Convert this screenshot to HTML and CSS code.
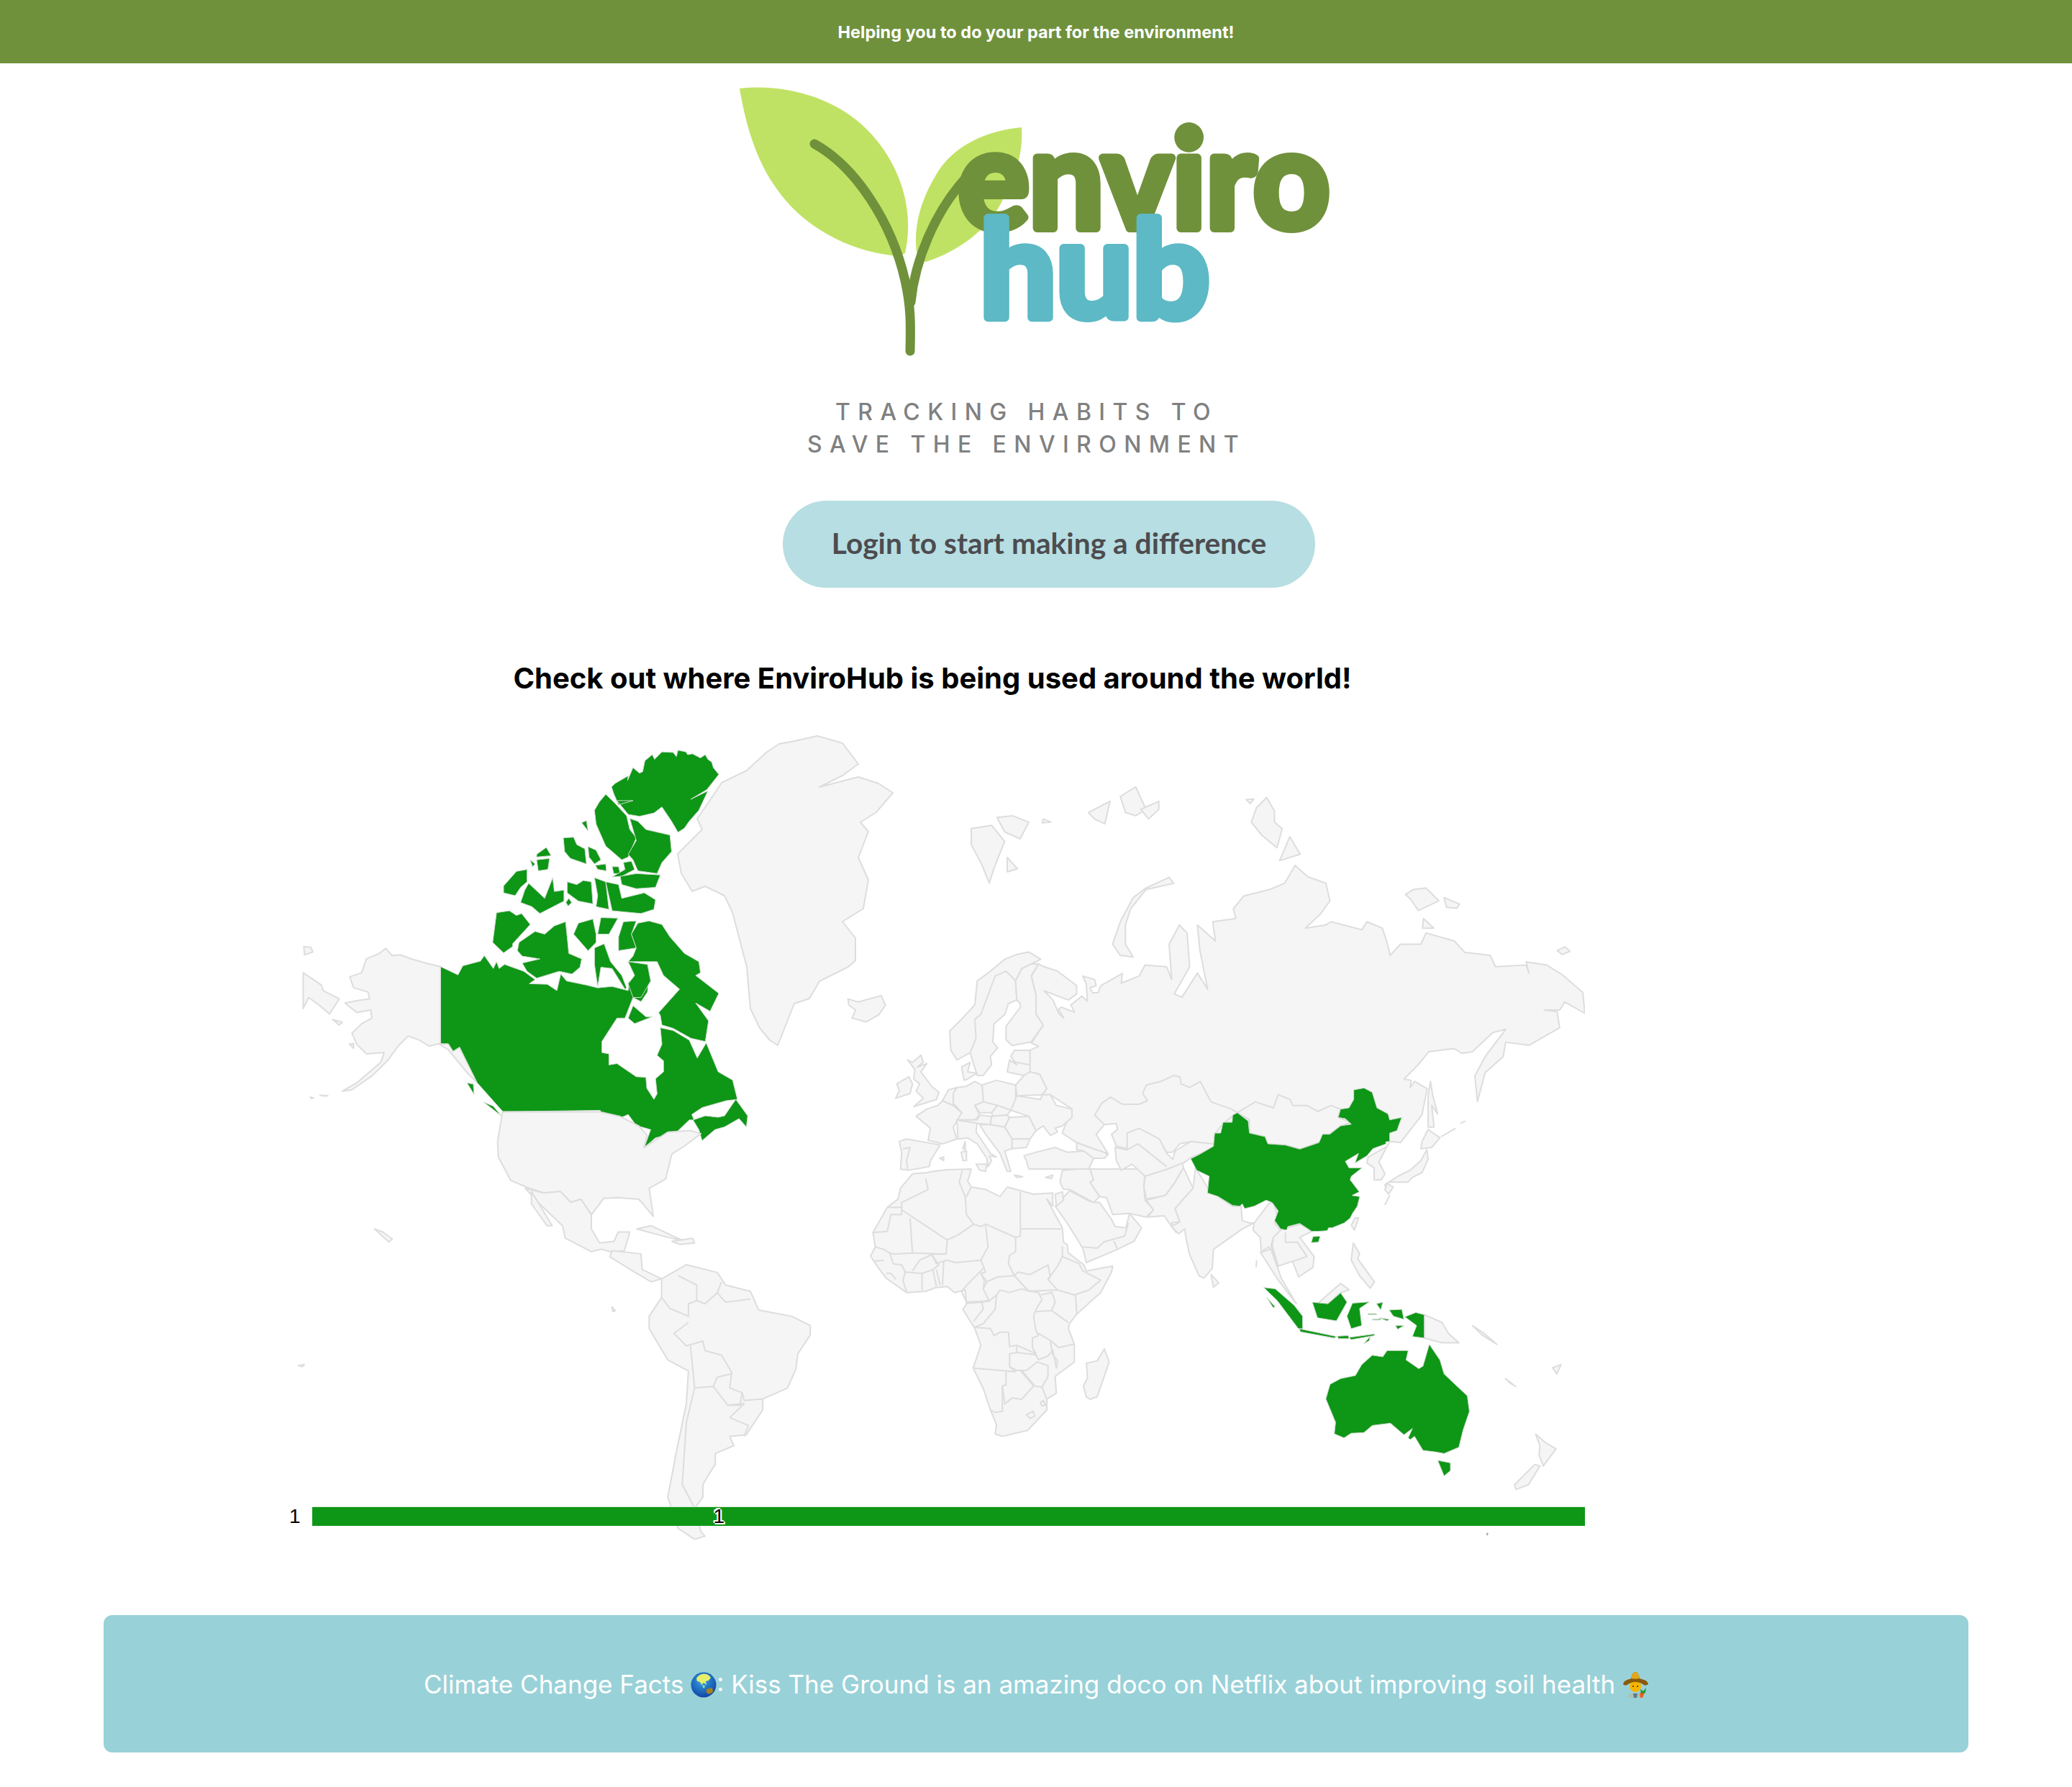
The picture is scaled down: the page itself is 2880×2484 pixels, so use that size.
FILE: index.html
```html
<!DOCTYPE html>
<html lang="en">
<head>
    <meta charset="UTF-8">
    <title>EnviroHub</title>
    <link rel="stylesheet" href="styles.css">
</head>
<body>

    <header class="top-banner">Helping you to do your part for the environment!</header>

    <!-- Logo -->
    <svg class="logo" viewBox="1028 118 824 380" role="img" aria-label="EnviroHub">
        <path class="leaf" d="M1028 123 C1090 116 1160 135 1205 180 C1250 225 1272 290 1258 352 L1250 356 C1190 352 1125 322 1085 270 C1050 225 1036 170 1028 123Z"/>
        <path class="leaf" d="M1420 177 C1375 181 1325 200 1300 245 C1276 285 1268 325 1276 362 L1287 364 C1330 350 1375 320 1395 275 C1414 240 1422 210 1420 177Z"/>
        <path class="stem" d="M1132 200 C1190 232 1240 310 1258 390 C1266 425 1266 450 1265 488"/>
        <path class="stem" d="M1266 420 C1272 360 1300 295 1340 250"/>
        <text class="logo-enviro" x="1332" y="317" textLength="516" lengthAdjust="spacingAndGlyphs">enviro</text>
        <text class="logo-hub" x="1362" y="441" textLength="319" lengthAdjust="spacingAndGlyphs">hub</text>
    </svg>

    <p class="tagline">TRACKING HABITS TO<br>SAVE THE ENVIRONMENT</p>

    <a class="login-btn">Login to start making a difference</a>

    <h2 class="map-title">Check out where EnviroHub is being used around the world!</h2>

    <!-- World map, groups use the scale each area was measured at -->
    <div class="map-wrap">
        <svg class="map" viewBox="389 1010 1814 1130" width="1814" height="1130">
            <!-- Alaska and Canada -->
            <g transform="translate(400 1000) scale(0.4464 0.3827)">
                <polygon class="land" points="476,898 430,885 385,870 350,855 325,858 305,832 285,850 245,870 230,920 193,935 205,975 250,990 255,1015 225,1020 178,1030 215,1065 258,1055 262,1085 230,1105 200,1140 215,1180 245,1215 300,1210 290,1245 250,1285 215,1320 170,1350 200,1345 262,1295 310,1240 345,1185 375,1150 410,1165 440,1187 470,1178 500,1200 560,1285 590,1320 535,1190 515,1205 500,1178 476,1178"/>
                <polygon class="land" points="48,920 105,965 110,985 160,1015 130,1070 100,1040 65,1010 48,1050"/>
                <polygon class="land" points="50,825 72,828 78,845 52,855"/>
                <polygon class="land" points="140,1090 170,1100 160,1110"/>
                <polygon class="land" points="192,1180 205,1177 205,1195"/>
                <polygon class="land" points="70,1372 80,1375 75,1378"/>
                <polygon class="land" points="100,1365 125,1367 110,1368"/>

                <polygon class="on" points="476,898 530,928 545,895 600,878 612,858 640,905 650,880 658,905 675,890 735,915 770,945 752,960 808,962 838,985 850,925 868,950 930,965 965,975 1010,970 1060,985 1062,950 1085,1010 1125,930 1120,990 1100,1025 1075,1010 1050,1085 1025,1085 1000,1130 978,1170 978,1210 1000,1215 1000,1255 1025,1250 1085,1298 1115,1300 1118,1340 1140,1380 1150,1360 1145,1305 1170,1280 1170,1240 1150,1220 1165,1180 1160,1120 1200,1130 1250,1165 1275,1230 1303,1175 1340,1280 1385,1310 1400,1380 1365,1385 1290,1410 1258,1435 1265,1455 1250,1455 1210,1500 1145,1520 1110,1555 1130,1490 1085,1475 1060,1435 1040,1445 975,1430 973,1420 670,1425 590,1320 535,1190 515,1205 500,1178 476,1178"/>
                <polygon class="on" points="1262,1455 1300,1440 1340,1445 1360,1440 1395,1380 1432,1440 1428,1480 1405,1450 1360,1480 1330,1490 1290,1530 1280,1490"/>
                <polygon class="on" points="1008,245 1020,232 1060,205 1058,222 1075,175 1095,195 1105,190 1112,150 1135,128 1142,145 1165,118 1200,120 1210,135 1215,112 1240,118 1245,128 1260,125 1285,140 1300,128 1308,145 1320,155 1325,175 1342,200 1305,255 1255,290 1308,260 1280,330 1250,370 1235,395 1215,410 1195,370 1165,318 1140,340 1095,352 1060,345 1025,295 1045,295 1075,295 1030,310 1015,270"/>
                <polygon class="on" points="990,272 1015,300 1055,350 1065,400 1085,430 1060,500 1040,510 990,460 960,380 955,330 970,300"/>
                <polygon class="on" points="1065,360 1090,370 1115,400 1190,420 1195,480 1165,520 1150,560 1090,550 1075,510 1060,490 1085,440 1075,400"/>
                <polygon class="on" points="915,375 930,368 935,405"/>
                <polygon class="on" points="858,430 890,428 900,455 925,470 930,525 880,505 862,480"/>
                <polygon class="on" points="935,462 960,475 975,510 955,525 938,500"/>
                <polygon class="on" points="775,490 805,465 820,495 775,500"/>
                <polygon class="on" points="775,510 815,505 810,545 780,550"/>
                <polygon class="on" points="755,510 770,525 762,535"/>
                <polygon class="on" points="958,530 990,525 992,550 965,545"/>
                <polygon class="on" points="1010,535 1030,535 1035,560 1015,560"/>
                <polygon class="on" points="1045,520 1070,515 1080,545 1040,570 1010,572 1050,545"/>
                <polygon class="on" points="1035,570 1085,560 1160,565 1145,610 1085,615 1040,600"/>
                <polygon class="on" points="712,552 745,545 745,590 725,610 708,640 672,630 672,605"/>
                <polygon class="on" points="750,595 800,650 825,575 830,625 860,620 860,660 785,705 760,680 725,665 738,620"/>
                <polygon class="on" points="870,590 900,600 920,585 945,590 950,670 905,660 870,630"/>
                <polygon class="on" points="955,575 990,590 1000,690 960,680 965,640"/>
                <polygon class="on" points="990,590 1030,600 1040,650 1110,630 1145,655 1140,690 1100,705 1010,695"/>
                <polygon class="on" points="875,650 884,665 873,678 866,665"/>
                <polygon class="on" points="650,702 690,695 712,712 728,705 755,745 700,815 700,825 672,848 638,810"/>
                <polygon class="on" points="720,810 770,770 800,780 830,750 865,735 870,790 875,850 915,870 910,900 885,925 845,915 775,940 745,915 730,885 785,870 730,860 715,840"/>
                <polygon class="on" points="905,740 950,725 960,780 960,810 935,840 890,780"/>
                <polygon class="on" points="975,720 1028,722 1000,780 965,780"/>
                <polygon class="on" points="1045,735 1085,732 1070,780 1085,830 1030,840 1030,790"/>
                <polygon class="on" points="1090,740 1125,732 1165,745 1190,790 1235,850 1280,880 1285,920 1270,930 1342,995 1315,1060 1270,1030 1310,1095 1300,1170 1255,1158 1200,1122 1165,1110 1160,1075 1155,1065 1220,980 1170,930 1150,880 1060,880 1075,860 1085,830 1070,780"/>
                <polygon class="on" points="955,830 985,815 1005,880 1040,930 1055,975 1050,980 1010,905 975,900 965,970 955,890"/>
                <polygon class="on" points="1060,880 1120,890 1130,950 1100,1010 1075,1010 1060,960 1080,930"/>
                <polygon class="on" points="1060,1085 1075,1040 1115,1080 1135,1080 1080,1105"/>
                <polygon class="on" points="558,1320 578,1325 580,1362"/>
                <polygon class="on" points="610,1390 640,1405 665,1440"/>
            </g>

            <!-- Greenland -->
            <polygon class="land" points="1100,1031 1136,1023 1171,1033 1193,1062 1171,1078 1139,1094 1193,1080 1221,1089 1241,1102 1218,1129 1196,1143 1207,1156 1193,1192 1207,1223 1200,1263 1171,1281 1189,1304 1189,1335 1179,1344 1139,1364 1125,1388 1104,1395 1081,1453 1070,1446 1056,1429 1043,1402 1038,1344 1018,1268 1007,1245 980,1232 962,1239 947,1214 942,1187 976,1153 969,1138 985,1115 1003,1088 1038,1071 1065,1046 1083,1034"/>

            <!-- Russia and the arctic islands -->
            <g transform="translate(1100 1000) scale(0.7143 0.4464)">
                <polygon class="land" points="110,870 130,880 175,860 183,890 170,920 145,942 118,930 125,905 112,890"/>
                <polygon class="land" points="481,762 490,769 518,784 555,829 555,855 539,874 492,845 509,874 520,915 530,930 520,903 525,896 551,912 544,889 565,862 576,877 574,825 567,799 590,810 593,829 581,836 586,851 597,851 602,829 644,791 642,821 677,799 688,765 730,770 740,810 735,700 755,640 770,665 775,770 745,855 760,865 790,790 810,840 795,720 790,640 825,690 820,630 865,620 860,590 880,550 930,530 960,510 980,455 1005,490 1040,510 1048,565 1030,605 1000,650 1040,640 1050,630 1110,655 1120,630 1150,650 1160,700 1165,735 1185,700 1225,700 1235,665 1290,690 1310,725 1360,735 1370,770 1430,765 1435,790 1430,755 1470,765 1500,795 1540,850 1544,915 1505,880 1495,905 1465,905 1490,910 1495,960 1435,1015 1390,1005 1385,1050 1350,1100 1335,1190 1330,1110 1350,1050 1390,965 1365,975 1325,1035 1305,1040 1290,1025 1240,1035 1220,1075 1192,1120 1206,1124 1204,1146 1213,1127 1237,1150 1227,1232 1185,1318 1164,1314 1100,1300 900,1300 750,1300 640,1230 609,1262 593,1292 616,1352 600,1344 555,1318 527,1288 546,1213 504,1169 488,1169 497,1150 483,1105 464,1098 464,1030 481,1018 467,1008 490,952 476,918 476,859 467,799"/>
                <polygon class="land" points="350,340 390,330 415,380 395,460 385,510 370,450 350,390"/>
                <polygon class="land" points="400,305 430,300 462,320 445,372 415,350"/>
                <polygon class="land" points="420,430 440,465 420,475"/>
                <polygon class="land" points="490,310 505,320 488,322"/>
                <polygon class="land" points="578,290 620,255 610,325 590,310"/>
                <polygon class="land" points="640,240 670,210 690,280 670,300 650,290"/>
                <polygon class="land" points="680,280 715,255 715,280 695,310"/>
                <polygon class="land" points="925,243 940,285 940,320 955,340 945,400 915,360 895,320 905,275"/>
                <polygon class="land" points="950,440 970,365 990,420"/>
                <polygon class="land" points="885,250 900,248 893,262"/>
                <polygon class="land" points="735,492 744,510 690,530 660,590 650,640 650,700 665,740 640,735 625,700 640,630 665,555 690,525"/>
                <polygon class="land" points="1195,545 1210,530 1235,525 1260,565 1220,595 1205,560"/>
                <polygon class="land" points="1270,555 1300,575 1295,588 1275,585"/>
                <polygon class="land" points="1230,620 1250,650 1228,650"/>
                <polygon class="land" points="1490,720 1505,708 1515,722 1500,732"/>
            </g>

            <!-- Europe -->
            <g transform="translate(1230 1320) scale(0.3333)">
                <polygon class="land" points="600,10 650,40 610,60 570,80 545,130 550,210 515,225 500,270 455,310 450,385 470,410 440,445 445,480 410,525 385,525 355,430 300,460 275,420 270,340 320,290 375,230 385,130 440,90 500,40 550,20"/>
                <polyline class="border" points="545,130 505,90 460,110 400,270 375,290 380,370 355,430"/>
                <polygon class="land" points="570,80 610,60 640,60 610,110 630,190 630,270 660,315 610,385 530,400 505,375 505,320 565,240 565,225 550,210 545,130"/>
                <polygon class="land" points="540,420 605,420 605,510 580,525 510,510 520,460 550,480 525,445"/>
                <polyline class="border" points="522,465 600,480"/>
                <polygon class="land" points="580,525 605,510 645,520 675,580 655,605 550,610 545,565"/>
                <polygon class="land" points="405,565 465,545 545,565 545,610 550,650 525,670 470,650 410,635"/>
                <polygon class="land" points="285,600 300,575 340,570 375,550 405,565 410,635 375,650 395,690 375,710 300,710 320,680 285,640"/>
                <polygon class="land" points="320,490 355,470 345,510 385,515 345,540 330,545"/>
                <polygon class="land" points="130,695 175,665 220,650 240,630 285,650 320,680 285,740 300,790 240,810 180,795 190,745"/>
                <polygon class="land" points="240,630 265,585 300,575 285,600 285,640 285,650"/>
                <polygon class="land" points="60,800 90,790 230,815 190,880 185,905 100,920 65,915 70,850"/>
                <polyline class="border" points="75,830 105,825 90,880 95,915"/>
                <polygon class="land" points="300,710 385,720 380,760 440,850 465,865 435,860 445,880 430,905 425,870 385,810 345,785 305,790"/>
                <polygon class="land" points="550,610 650,625 655,605 690,605 715,650 780,665 780,700 740,735 710,745 720,760 690,775 660,735 630,755 600,695 525,670"/>
                <polygon class="land" points="375,650 410,635 470,650 445,680 395,680"/>
                <polygon class="land" points="445,680 470,650 525,670 510,690 450,695"/>
                <polygon class="land" points="300,710 385,710 395,690 445,695 440,730 390,725"/>
                <polygon class="land" points="445,695 510,690 520,700 500,740 440,730"/>
                <polygon class="land" points="520,700 600,695 630,755 605,790 530,790 500,740"/>
                <polygon class="land" points="530,790 605,790 590,825 530,830"/>
                <polygon class="land" points="395,730 440,730 500,740 530,790 530,830 500,840 525,925 510,925 480,850 420,770"/>
                <polygon class="land" points="580,860 630,845 710,825 760,845 830,840 870,870 850,915 720,915 600,915 590,880"/>
                <polygon class="land" points="800,805 880,835 900,840 930,855 915,870 870,870 830,840 800,835"/>
                <polygon class="land" points="905,640 875,690 915,730 965,725 970,750 945,770 965,820 1010,830 1015,765 1060,750 1085,790 1140,790 1175,845 1200,845 1230,810 1280,800 1370,820 1375,770 1410,725 1470,680 1445,665 1360,635 1315,550 1270,575 1235,560 1230,530 1205,525 1150,550 1090,565 1075,600 1095,630 1060,645 990,645 940,615"/>
                <polygon class="land" points="150,440 160,470 135,490 175,475 150,510 195,570 225,595 215,625 120,655 160,620 130,590 145,560 120,540 125,500 95,460 115,470"/>
                <polygon class="land" points="50,560 100,530 115,560 105,600 45,620 60,590"/>
                <polygon class="land" points="318,845 340,840 340,880 325,880"/>
                <polygon class="land" points="335,800 335,835 325,830"/>
                <polygon class="land" points="380,895 425,895 420,925 395,920"/>
                <polygon class="land" points="228,870 245,865 245,880"/>
            </g>

            <!-- Africa and Middle East -->
            <g transform="translate(1200 1620) scale(0.3333)">
                <polygon class="land" points="205,35 265,30 290,25 345,18 450,15 440,50 435,65 450,90 510,100 570,130 600,90 710,120 790,115 790,170 765,140 830,260 835,320 850,330 855,365 920,415 930,440 1040,420 1035,445 990,530 890,620 860,660 855,680 880,745 880,820 800,880 805,950 765,975 765,1020 685,1105 580,1130 550,1120 555,1080 530,1020 500,930 458,845 490,750 465,680 415,600 430,580 425,520 380,530 350,505 300,510 260,525 180,530 95,470 65,430 30,378 50,340 40,280 100,175 145,140 155,95"/>
                <polyline class="border" points="260,55 270,100 160,155 160,175 100,175"/>
                <polyline class="border" points="160,175 160,205 115,205 100,275 40,280"/>
                <polyline class="border" points="160,185 340,305 350,310 395,290 460,245 430,205 425,130 400,70 413,20"/>
                <polyline class="border" points="430,130 450,90"/>
                <polyline class="border" points="655,110 655,295 635,300 510,245 490,255 460,245"/>
                <polyline class="border" points="655,265 825,265"/>
                <polyline class="border" points="195,220 205,365 125,370 110,365 85,350 50,340"/>
                <polyline class="border" points="205,365 345,370 350,310"/>
                <polyline class="border" points="345,370 285,370 305,410 345,395 385,405 490,395 520,340 510,250"/>
                <polyline class="border" points="635,300 635,360 610,375 605,410 630,460 560,465 515,485 490,450 510,445 490,395"/>
                <polyline class="border" points="630,460 645,445 695,455 770,415 780,465 770,475 810,420 830,380 830,335"/>
                <polyline class="border" points="830,380 900,410 915,440 990,478 940,520 880,540 810,520 770,475"/>
                <polyline class="border" points="890,620 885,540"/>
                <polyline class="border" points="785,525 800,570 785,605 855,655"/>
                <polyline class="border" points="630,460 690,525 795,520 810,520"/>
                <polyline class="border" points="335,400 345,395"/>
                <polyline class="border" points="335,400 330,500"/>
                <polyline class="border" points="490,450 505,480 500,515 525,565 430,570 410,525 440,490 505,425"/>
                <polyline class="border" points="515,485 500,515"/>
                <polyline class="border" points="555,540 570,520 610,530 660,515 730,530 745,560 720,600 710,630 720,690 730,710 705,720 705,760 720,785 640,750 610,755 605,695 570,695 545,710 530,680 465,675 500,660 550,600 555,540 525,565"/>
                <polyline class="border" points="740,540 785,530"/>
                <polyline class="border" points="720,610 785,605"/>
                <polyline class="border" points="730,700 780,730 815,760 880,745"/>
                <polyline class="border" points="640,755 640,780 610,785 610,840 635,860 458,845"/>
                <polyline class="border" points="640,780 720,790 730,810 770,795 790,770 805,845 810,815 790,790 780,735"/>
                <polyline class="border" points="610,840 640,855 680,855 725,820 770,835 770,880 745,925 765,975"/>
                <polyline class="border" points="660,855 715,920 745,925"/>
                <polyline class="border" points="595,860 595,915 580,920 580,1025 550,1030 530,1020"/>
                <polyline class="border" points="655,855 710,920 660,975 620,970 590,995 580,920"/>
                <polygon class="border" points="680,1040 708,1025 715,1045 695,1055"/>
                <polygon class="border" points="738,990 750,980 760,1000 745,1003"/>
                <polyline class="border" points="45,400 85,395"/>
                <polyline class="border" points="110,365 125,410 160,415 175,445 245,450 245,520"/>
                <polyline class="border" points="175,445 165,480 180,525"/>
                <polyline class="border" points="245,450 290,435 305,505"/>
                <polyline class="border" points="305,435 320,500"/>
                <polyline class="border" points="205,440 235,395 285,372 315,415 290,435"/>
                <polyline class="border" points="95,450 115,450 135,475"/>
                <polyline class="border" points="430,575 495,570 500,600 460,650"/>
                <polyline class="border" points="495,570 525,565"/>
                <polygon class="land" points="1005,765 1025,820 975,965 945,975 930,965 918,920 935,885 930,825 975,815"/>
                <polygon class="land" points="800,170 860,105 945,150 985,155 1035,225 1050,255 1095,260 1110,200 1160,260 1130,315 1060,350 930,405 915,345 850,240"/>
                <polyline class="border" points="915,340 975,345 1005,318 1090,295 1105,240"/>
                <polyline class="border" points="1045,315 1060,350"/>
                <polygon class="land" points="945,15 960,60 945,70 985,130 1015,135 1040,205 1110,200 1180,215 1210,185 1175,145 1170,90 1175,15"/>
                <polygon class="land" points="820,70 830,20 890,15 945,15 960,60 945,70 985,130 960,155 860,100 835,100"/>
                <polygon class="land" points="800,120 830,110 835,145 805,170"/>
                <polygon class="land" points="630,40 665,47 640,50"/>
                <polygon class="land" points="760,50 790,40 785,55"/>
                <polygon class="land" points="1450,455 1482,490 1460,508"/>
            </g>

            <!-- Central and east Asia -->
            <g transform="translate(1530 1480) scale(0.3333)">
                <polygon class="land" points="60,345 110,355 110,285 160,265 245,310 275,370 300,395 310,360 375,320 470,330 475,345 380,385 345,410 280,435 205,470 185,465 130,415 85,440 65,400"/>
                <polyline class="border" points="110,355 155,330 275,425"/>
                <polygon class="land" points="185,465 280,435 340,410 345,430 310,490 270,545 190,560 180,510"/>
                <polygon class="land" points="190,565 270,545 310,490 345,430 385,515 310,600 330,655 295,660 315,700 285,660 265,630 195,635 220,605"/>
                <polygon class="land" points="395,430 450,520 490,550 550,590 585,590 590,650 620,660 640,660 590,685 470,770 465,850 430,890 410,880 370,790 355,720 350,685 325,705 295,675 330,655 310,600 385,515"/>
                <polygon class="land" points="640,660 700,580 720,575 740,640 725,660 750,690 720,720 710,755 740,840 700,760 670,780 665,720 635,690"/>
                <polygon class="land" points="750,690 775,680 835,665 880,695 830,720 890,800 885,845 825,885 800,820 740,840 715,755 720,720"/>
                <polyline class="border" points="770,700 770,740 820,740 860,800 800,820"/>
                <polygon class="land" points="570,200 645,155 720,180 740,125 790,145 800,170 860,170 905,195 960,170 1000,185 990,220 1045,240 1000,255 955,290 925,290 920,320 830,352 770,335 695,330 685,300 620,285 620,230"/>
                <polygon class="land" points="1205,320 1195,340 1115,385 1110,410 1140,430 1140,480 1170,480 1185,455 1160,405"/>
                <polygon class="land" points="1375,70 1385,130 1405,205 1380,170 1390,260 1365,260 1365,130"/>
                <polygon class="land" points="1365,270 1415,305 1380,345 1335,350 1340,320"/>
                <polygon class="land" points="1360,355 1365,395 1340,450 1300,470 1280,490 1200,490 1190,515 1185,500 1240,465 1290,440 1335,400"/>
                <polygon class="land" points="1195,495 1220,510 1200,540 1185,520"/>
                <polygon class="land" points="1060,640 1075,638 1058,690 1045,670"/>
                <polyline class="border" points="1420,300 1480,265"/>
                <polyline class="border" points="1500,245 1520,235"/>
                <polyline class="border" points="1205,545 1185,585"/>
                <polyline class="border" points="650,815 648,845"/>
                <polygon class="on" points="570,200 615,235 620,285 685,300 697,330 770,335 830,352 910,325 925,290 955,290 1000,255 1045,248 1020,225 990,220 1000,185 1035,180 1055,145 1055,105 1098,97 1132,115 1152,180 1198,205 1205,230 1255,220 1235,275 1205,285 1205,320 1188,322 1190,330 1135,350 1110,380 1060,410 1075,370 1020,403 1035,430 1090,430 1045,465 1040,480 1078,530 1048,545 1080,550 1070,590 1050,620 1040,640 1015,660 965,680 950,680 945,692 905,695 880,695 830,662 780,675 775,690 750,685 725,650 740,610 715,575 690,565 640,590 600,600 590,580 580,590 550,587 490,550 445,535 452,465 400,440 375,392 410,375 470,340 475,285 500,285 510,240 548,240 550,210"/>
                <polygon class="on" points="885,717 915,715 908,740 878,742"/>
            </g>

            <!-- South east Asia, Indonesia, Australia -->
            <g transform="translate(1300 1500) scale(0.5869 0.4337)">
                <polygon class="land" points="795,545 820,640 855,720 810,640 770,555"/>
                <polygon class="land" points="990,525 1005,560 1000,575 1040,650 1030,670 1005,630 985,580"/>
                <polygon class="land" points="905,720 960,655 980,675 960,685 930,720"/>
                <polygon class="land" points="1158,755 1200,780 1215,815 1240,845 1200,845 1158,830"/>
                <polygon class="land" points="1422,1138 1445,1165 1470,1185 1440,1240 1430,1205 1432,1175"/>
                <polygon class="land" points="1420,1235 1432,1240 1405,1300 1375,1315 1372,1300"/>
                <polygon class="land" points="1350,960 1375,985 1362,975"/>
                <polygon class="land" points="1462,925 1482,915 1472,945"/>
                <polygon class="land" points="1272,790 1300,815 1330,850 1295,820"/>
                <polygon class="on" points="778,668 805,672 850,725 870,760 870,800 860,800 810,710"/>
                <polygon class="on" points="862,800 950,825 945,830 865,810"/>
                <polygon class="on" points="893,715 930,720 960,685 975,715 950,775 905,765"/>
                <polygon class="on" points="988,718 1028,714 1005,735 1010,790 985,800 975,760"/>
                <polygon class="on" points="1112,762 1138,748 1158,755 1158,830 1130,825 1140,790"/>
                <polygon class="on" points="952,824 978,822 980,832 955,832"/>
                <polygon class="on" points="980,828 1040,817 1040,822 985,835"/>
                <polygon class="on" points="1045,720 1060,715 1055,740"/>
                <polygon class="on" points="1075,740 1105,738 1110,770 1085,760"/>
                <polygon class="on" points="1025,752 1045,752 1045,755 1025,755"/>
                <polygon class="on" points="1035,770 1055,768 1055,772 1035,772"/>
                <polygon class="on" points="1052,765 1075,770 1070,775"/>
                <polygon class="on" points="1090,790 1110,790 1095,802"/>
                <polygon class="on" points="1015,848 1030,825 1028,838"/>
                <polygon class="on" points="785,700 805,730 800,732"/>
                <polygon class="on" points="1070,870 1120,870 1115,900 1145,928 1155,920 1170,850 1195,900 1205,945 1240,990 1260,1015 1265,1065 1250,1125 1240,1180 1205,1200 1185,1195 1155,1190 1135,1145 1125,1155 1120,1150 1130,1120 1110,1140 1078,1103 1035,1110 1015,1133 985,1135 968,1150 945,1137 948,1100 925,1025 935,978 960,960 995,950 1010,915 1035,885 1060,890"/>
                <polygon class="on" points="1190,1222 1220,1230 1220,1255 1205,1272"/>
                <polygon class="on" points="1305,1455 1310,1455 1307,1464"/>
            </g>

            <!-- Americas -->
            <g transform="translate(400 1500) scale(0.5741 0.4337)">
                <polygon class="land" points="520,105 755,105 805,120 850,150 870,180 862,220 920,170 975,165 1000,175 960,215 930,240 915,320 875,350 885,440 860,400 850,385 800,380 765,382 735,435 710,385 685,395 660,360 620,365 585,350 540,325 510,250 508,200"/>
                <polygon class="land" points="575,350 620,365 660,360 685,395 710,385 735,435 735,480 755,525 790,520 800,490 828,490 815,550 785,555 760,545 735,553 672,510 665,470 610,400"/>
                <polygon class="land" points="590,360 640,470 628,470 590,400"/>
                <polygon class="land" points="785,550 855,560 858,610 905,640 880,650 835,615 780,570"/>
                <polygon class="land" points="845,480 880,470 960,520 900,500"/>
                <polygon class="land" points="930,520 980,510 985,525 950,530"/>
                <polygon class="land" points="905,640 965,595 1040,620 1060,660 1120,680 1140,740 1220,760 1265,790 1265,820 1235,880 1230,930 1210,990 1150,1025 1150,1060 1110,1140 1070,1145 1080,1175 1035,1200 1035,1235 1020,1265 1005,1300 1005,1340 985,1375 1000,1450 1010,1465 985,1475 945,1440 920,1340 940,1200 965,1040 970,935 920,900 875,800 875,760 905,700"/>
                <polygon class="land" points="210,480 230,490 245,505 253,512 245,522"/>
                <polygon class="land" points="785,730 793,742 787,745"/>
                <polygon class="land" points="25,918 40,915 35,922"/>
                <polyline class="border" points="945,630 990,660 990,710 1010,720 1040,685 1050,650"/>
                <polyline class="border" points="905,700 925,735 970,760 970,720 990,710"/>
                <polyline class="border" points="1120,705 1060,715 1040,685"/>
                <polyline class="border" points="970,780 935,815 965,855 1005,840 1010,870 1050,885 1075,940 1070,990 1100,1005 1105,1030 1150,1025"/>
                <polyline class="border" points="975,855 985,990 1030,985 1040,955 1075,945"/>
                <polyline class="border" points="1030,985 1065,1045 1095,1045 1100,1005"/>
                <polyline class="border" points="1070,1085 1115,1110 1105,1145"/>
                <polyline class="border" points="985,990 965,1100 955,1300 985,1375"/>
                <polyline class="border" points="1065,1045 1105,1040 1070,1085"/>
            </g>
        </svg>

        <!-- Legend sits over the bottom of the map -->
        <div class="legend">
            <span class="legend-min">1</span>
            <div class="legend-bar"><span class="legend-max">1</span></div>
        </div>
    </div>

    <section class="fact-card">
        <p>Climate Change Facts
            <svg class="emoji" viewBox="0 0 36 36">
                <defs>
                    <radialGradient id="sea" cx="45%" cy="35%" r="70%">
                        <stop offset="0" stop-color="#3aa2e8"/>
                        <stop offset="1" stop-color="#0b3f9e"/>
                    </radialGradient>
                </defs>
                <circle cx="18" cy="18" r="17.5" fill="url(#sea)"/>
                <path d="M8 9 C13 1 24 1 28 8 L25 12 L21 13 L22 18 L18 15 L15 18 L13 14 L9 13Z" fill="#e6ee6a"/>
                <path d="M22 24 L30 22 L31 28 L26 31 L22 29Z" fill="#a9821a"/>
                <path d="M16 18 L20 19 L19 23 L17 22Z" fill="#8fd4a4"/>
            </svg>: Kiss The Ground is an amazing doco on Netflix about improving soil health
            <svg class="emoji" viewBox="0 0 36 36">
                <path d="M9 30 L27 30 L28 36 L8 36Z" fill="#a8c4b8"/>
                <path d="M15 30 L21 30 L20 36 L16 36Z" fill="#66778a"/>
                <circle cx="18" cy="20" r="8" fill="#f6b400"/>
                <path d="M1 17 C3 10 10 11 12 9 C13 4 15 0 18 0 C21 0 23 4 24 9 C27 11 34 10 36 17 C30 22 29 14 18 14 C8 14 6 22 1 17Z" fill="#8a5a0a"/>
                <path d="M12 9 C13 4 15 0 18 0 C21 0 23 4 24 9 C20 10 16 10 12 9Z" fill="#e2a81a"/>
                <circle cx="15" cy="20" r="1" fill="#3a2a10"/>
                <circle cx="21" cy="20" r="1" fill="#3a2a10"/>
                <path d="M24 29 L31 29 L28 36 L25 36Z" fill="#e8611a"/>
                <path d="M26 30 L25 24 L29 27 L33 22 L32 29Z" fill="#1f9a2e"/>
            </svg>
        </p>
    </section>

</body>
</html>
```

FILE: styles.css
```css
/* General Styles */
body {
    margin: 0;
    padding: 0 0 48px;
    background-color: #ffffff;
    font-family: 'Inter', sans-serif;
}

/* Top Banner */
.top-banner {
    height: 88px;
    display: flex;
    justify-content: center;
    align-items: center;
    background-color: #70913b;
    color: #ffffff;
    font-size: 23.5px;
    font-weight: 700;
}

/* Logo */
.logo {
    display: block;
    width: 824px;
    height: 380px;
    margin: 30px auto 0;
    overflow: visible;
}

.leaf {
    fill: #c0e264;
}

.stem {
    fill: none;
    stroke: #70913b;
    stroke-width: 13;
    stroke-linecap: round;
}

.logo-enviro, .logo-hub {
    font-family: 'Lato', sans-serif;
    font-weight: 700;
    stroke-width: 12;
    stroke-linejoin: round;
}

.logo-enviro {
    font-size: 190px;
    fill: #70913b;
    stroke: #70913b;
}

.logo-hub {
    font-size: 186px;
    fill: #5cb9c5;
    stroke: #5cb9c5;
}

/* Tagline */
.tagline {
    margin: 52px 0 0;
    padding-right: 26px;
    text-align: center;
    font-size: 32px;
    font-weight: 500;
    line-height: 45px;
    letter-spacing: 10.4px;
    color: #808080;
}

/* Login Button */
.login-btn {
    display: flex;
    justify-content: center;
    align-items: center;
    box-sizing: border-box;
    width: 740px;
    height: 121px;
    margin: 56px 0 0 1088px;
    padding-bottom: 4px;
    border-radius: 61px;
    background-color: #b7dee2;
    color: #4c4c50;
    font-family: 'Lato', sans-serif;
    font-size: 40.7px;
    font-weight: 700;
}

/* Map Section */
.map-title {
    width: 1814px;
    margin: 102px 0 0 389px;
    text-align: center;
    font-size: 40px;
    font-weight: 700;
    line-height: 48px;
    color: #000000;
}

.map-wrap {
    position: relative;
    width: 1814px;
    height: 1130px;
    margin: 43px 0 0 389px;
}

.map {
    display: block;
}

.map polygon, .map polyline {
    vector-effect: non-scaling-stroke;
    stroke-linejoin: round;
}

.land {
    fill: #f5f5f5;
    stroke: #dddddd;
    stroke-width: 2;
}

.on {
    fill: #0e9616;
    stroke: #cfdccf;
    stroke-width: 1;
}

.border {
    fill: none;
    stroke: #dddddd;
    stroke-width: 2;
}

/* Legend */
.legend {
    position: absolute;
    left: 13px;
    top: 1085px;
    right: 0;
    display: flex;
    align-items: center;
    gap: 16px;
    font-family: 'Liberation Sans', sans-serif;
    font-size: 28px;
    line-height: 26px;
}

.legend-bar {
    position: relative;
    flex: 1;
    height: 26px;
    background-color: #0e9616;
    box-shadow: 0 -1px 0 #d8ead8;
}

.legend-max {
    position: absolute;
    left: 558px;
    top: 0;
    text-shadow: 2px 0 0 #fff, -2px 0 0 #fff, 0 2px 0 #fff, 0 -2px 0 #fff, 2px 2px 0 #fff, -2px -2px 0 #fff;
}

/* Facts Card */
.fact-card {
    display: flex;
    justify-content: center;
    align-items: center;
    height: 191px;
    margin: 105px 144px 0;
    border-radius: 12px;
    background-color: #99d1d8;
    color: #ffffff;
    font-size: 35px;
}

.fact-card p {
    margin: 0;
}

.emoji {
    width: 36px;
    height: 36px;
    vertical-align: -6px;
}
```
